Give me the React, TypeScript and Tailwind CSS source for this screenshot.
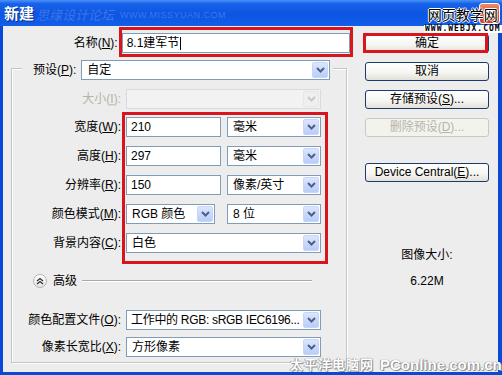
import type { ReactNode } from "react";

const FRAME = "border-[#0b48d6]";

function Chevron({ disabled }: { disabled?: boolean }) {
  return (
    <svg width="9" height="6" viewBox="0 0 9 6">
      <path
        d="M1 1 L4.5 4.5 L8 1"
        fill="none"
        stroke={disabled ? "#c9c9c9" : "#4d6185"}
        strokeWidth="2"
      />
    </svg>
  );
}

function Arrow({ disabled }: { disabled?: boolean }) {
  return (
    <span
      className={`w-[16px] h-[16px] mr-[1px] rounded-[2px] border flex items-center justify-center ${
        disabled
          ? "border-[#e6e6e6] bg-[#efefef]"
          : "border-[#c6d6fb] bg-[linear-gradient(180deg,#dbe6fe_0%,#b9cdf9_100%)]"
      }`}
    >
      <Chevron disabled={disabled} />
    </span>
  );
}

function Combo({ width, value, disabled, className = "" }: { width: string; value?: string; disabled?: boolean; className?: string }) {
  return (
    <div
      className={`h-[20px] ${width} ${className} flex items-center border ${
        disabled ? "border-[#d3dbe6] bg-[#f2f2f2]" : "border-[#7f9db9] bg-white"
      }`}
    >
      <span className="flex-1 pl-[5px] whitespace-nowrap overflow-hidden">{value}</span>
      <Arrow disabled={disabled} />
    </div>
  );
}

function Field({ width, value }: { width: string; value: string }) {
  return (
    <div className={`h-[20px] ${width} flex items-center border border-[#7f9db9] bg-white pl-[4px]`}>
      {value}
    </div>
  );
}

function Label({ children, muted }: { children: ReactNode; muted?: boolean }) {
  return (
    <div className={`w-[109px] text-right whitespace-nowrap ${muted ? "text-[#b5b3a8]" : ""}`}>
      {children}
    </div>
  );
}

function Row({ label, children, className = "mt-[9px]", muted }: { label: ReactNode; children: ReactNode; className?: string; muted?: boolean }) {
  return (
    <div className={`flex items-center h-[20px] ${className}`}>
      <Label muted={muted}>{label}</Label>
      <div className="ml-[5px] flex gap-[6px]">{children}</div>
    </div>
  );
}

function Button({ children, disabled, className = "mt-[9px]" }: { children: ReactNode; disabled?: boolean; className?: string }) {
  return (
    <div
      className={`w-[124px] h-[19px] rounded-[3px] border flex items-center justify-center ${className} ${
        disabled
          ? "border-[#cbc9bd] bg-[#f3f3ee] text-[#b7b5aa]"
          : "border-[#1c3a6b] bg-[linear-gradient(180deg,#ffffff_0%,#f6f6f3_55%,#e2e0d8_100%)]"
      }`}
    >
      {children}
    </div>
  );
}

export default function App() {
  return (
    <div className="w-[502px] h-[375px] relative overflow-hidden flex flex-col bg-[#0b48d6] text-[12px] leading-[15px] text-black font-['Liberation_Sans','Noto_Sans_CJK_SC',sans-serif]">
      {/* Title bar */}
      <div className="h-[26px] shrink-0 flex items-center bg-[linear-gradient(180deg,#4a93f7_0%,#1862ea_14%,#0b55e2_55%,#125fe9_100%)]">
        <span className="ml-[4px] text-white font-bold text-[15px] [text-shadow:1px_1px_0_#0a2f8c]">新建</span>
        <span className="ml-[2px] mt-[4px] text-[#3d77e9] text-[13px] italic">思缘设计论坛</span>
        <span className="ml-[6px] mt-[4px] text-[#3d77e9] text-[9px] tracking-[0.5px]">WWW.MISSYUAN.COM</span>
        <div className="ml-auto mr-[2px] w-[21px] h-[21px] rounded-[3px] border border-white bg-[linear-gradient(180deg,#ec8a6c_0%,#e2553a_50%,#d44422_100%)] flex items-center justify-center">
          <svg width="11" height="11" viewBox="0 0 11 11">
            <path d="M1.5 1.5 L9.5 9.5 M9.5 1.5 L1.5 9.5" stroke="#fff" strokeWidth="2" />
          </svg>
        </div>
      </div>

      {/* Body */}
      <div className={`flex-1 flex bg-[#ededed] border-l-[3px] border-r-[4px] border-b-[3px] ${FRAME}`}>
        {/* Left column */}
        <div className="w-[347px] shrink-0">
          <div className="flex items-center h-[20px] mt-[7px]">
            <div className="w-[115px] text-right">
              名称(<span className="underline">N</span>):
            </div>
            <div className="ml-[4px] w-[229px] h-[20px] border border-[#7f9db9] bg-white flex items-center pl-[4px]">
              8.1建军节<span className="ml-[1px] w-px h-[13px] bg-black" />
            </div>
          </div>

          {/* Group box */}
          <div className="ml-[8px] mt-[15px] w-[336px] border border-[#c5c5c5] shadow-[inset_1px_1px_0_#ffffff,1px_1px_0_#ffffff] pb-[5px]">
            <div className="-mt-[9px] ml-[10px] w-fit flex items-center h-[20px] bg-[#ededed] pl-[11px] pr-[3px] gap-[5px]">
              <span className="whitespace-nowrap">
                预设(<span className="underline">P</span>):
              </span>
              <Combo width="w-[249px]" value="自定" />
            </div>

            <Row label={<>大小(<span className="underline">I</span>):</>} muted>
              <Combo width="w-[195px]" disabled />
            </Row>
            <Row label={<>宽度(<span className="underline">W</span>):</>} className="mt-[8px]">
              <Field width="w-[95px]" value="210" />
              <Combo width="w-[94px]" value="毫米" />
            </Row>
            <Row label={<>高度(<span className="underline">H</span>):</>}>
              <Field width="w-[95px]" value="297" />
              <Combo width="w-[94px]" value="毫米" />
            </Row>
            <Row label={<>分辨率(<span className="underline">R</span>):</>}>
              <Field width="w-[95px]" value="150" />
              <Combo width="w-[94px]" value="像素/英寸" />
            </Row>
            <Row label={<>颜色模式(<span className="underline">M</span>):</>}>
              <Combo width="w-[89px]" value="RGB 颜色" />
              <Combo width="w-[94px]" value="8 位" className="ml-[6px]" />
            </Row>
            <Row label={<>背景内容(<span className="underline">C</span>):</>}>
              <Combo width="w-[195px]" value="白色" />
            </Row>

            {/* Advanced */}
            <div className="mt-[20px] h-[16px] flex items-center">
              <div className="ml-[21px] w-[14px] h-[14px] rounded-full border border-[#b4b4b4] bg-[linear-gradient(180deg,#ffffff_0%,#e4e4e4_100%)] flex items-center justify-center">
                <svg width="8" height="8" viewBox="0 0 8 8">
                  <path d="M1 4 L4 1.5 L7 4 M1 7 L4 4.5 L7 7" fill="none" stroke="#333" strokeWidth="1.3" />
                </svg>
              </div>
              <span className="ml-[6px]">高级</span>
              <div className="ml-[5px] w-[230px] h-[2px] border-t border-[#a9a9a9] border-b border-b-white" />
            </div>

            <Row label={<>颜色配置文件(<span className="underline">O</span>):</>} className="mt-[21px]">
              <div className="h-[20px] w-[195px] flex items-center border border-[#7f9db9] bg-white">
                <span className="flex-1 pl-[4px] whitespace-nowrap overflow-hidden tracking-[-0.3px]">
                  工作中的 RGB: sRGB IEC6196...
                </span>
                <Arrow />
              </div>
            </Row>
            <Row label={<>像素长宽比(<span className="underline">X</span>):</>} className="mt-[7px]">
              <Combo width="w-[195px]" value="方形像素" />
            </Row>
          </div>
        </div>

        {/* Right column */}
        <div className="flex-1 flex flex-col pl-[15px]">
          <Button className="mt-[8px]">确定</Button>
          <Button>取消</Button>
          <Button>
            存储预设(<span className="underline">S</span>)...
          </Button>
          <Button disabled>
            删除预设(<span className="underline">D</span>)...
          </Button>
          <Button className="mt-[26px]">
            Device Central(<span className="underline">E</span>)...
          </Button>
          <div className="w-[124px] text-center mt-[66px]">图像大小:</div>
          <div className="w-[124px] text-center mt-[11px]">6.22M</div>
        </div>
      </div>

      {/* Annotation boxes */}
      <div className="absolute left-[119px] top-[27px] w-[234px] h-[30px] border-[3px] border-[#d8141c]" />
      <div className="absolute left-[363px] top-[33px] w-[125px] h-[20px] border-[3px] border-[#d8141c]" />
      <div className="absolute left-[122px] top-[112px] w-[206px] h-[152px] border-[3px] border-[#d8141c]" />

      {/* Watermarks */}
      <div className="absolute left-[424px] top-[8px] flex flex-col items-center">
        <span className="text-[14px] leading-[15px] text-black [text-shadow:1px_0_0_#fff,-1px_0_0_#fff,0_1px_0_#fff,0_-1px_0_#fff]">
          网页教学网
        </span>
        <span className="mt-[2px] text-[8px] leading-[8px] font-bold tracking-[1px] text-black bg-white px-[1px] font-['DejaVu_Sans_Mono',monospace]">
          WWW.WEBJX.COM
        </span>
      </div>
      <div className="absolute left-[290px] top-[357px] flex items-center gap-[6px] font-bold text-white [text-shadow:0_0_1px_#666,1px_1px_0_#999,-1px_0_0_#bbb]">
        <span className="text-[13px] tracking-[1px]">太平洋电脑网</span>
        <span className="text-[15px]">PConline.com.cn</span>
      </div>
    </div>
  );
}
